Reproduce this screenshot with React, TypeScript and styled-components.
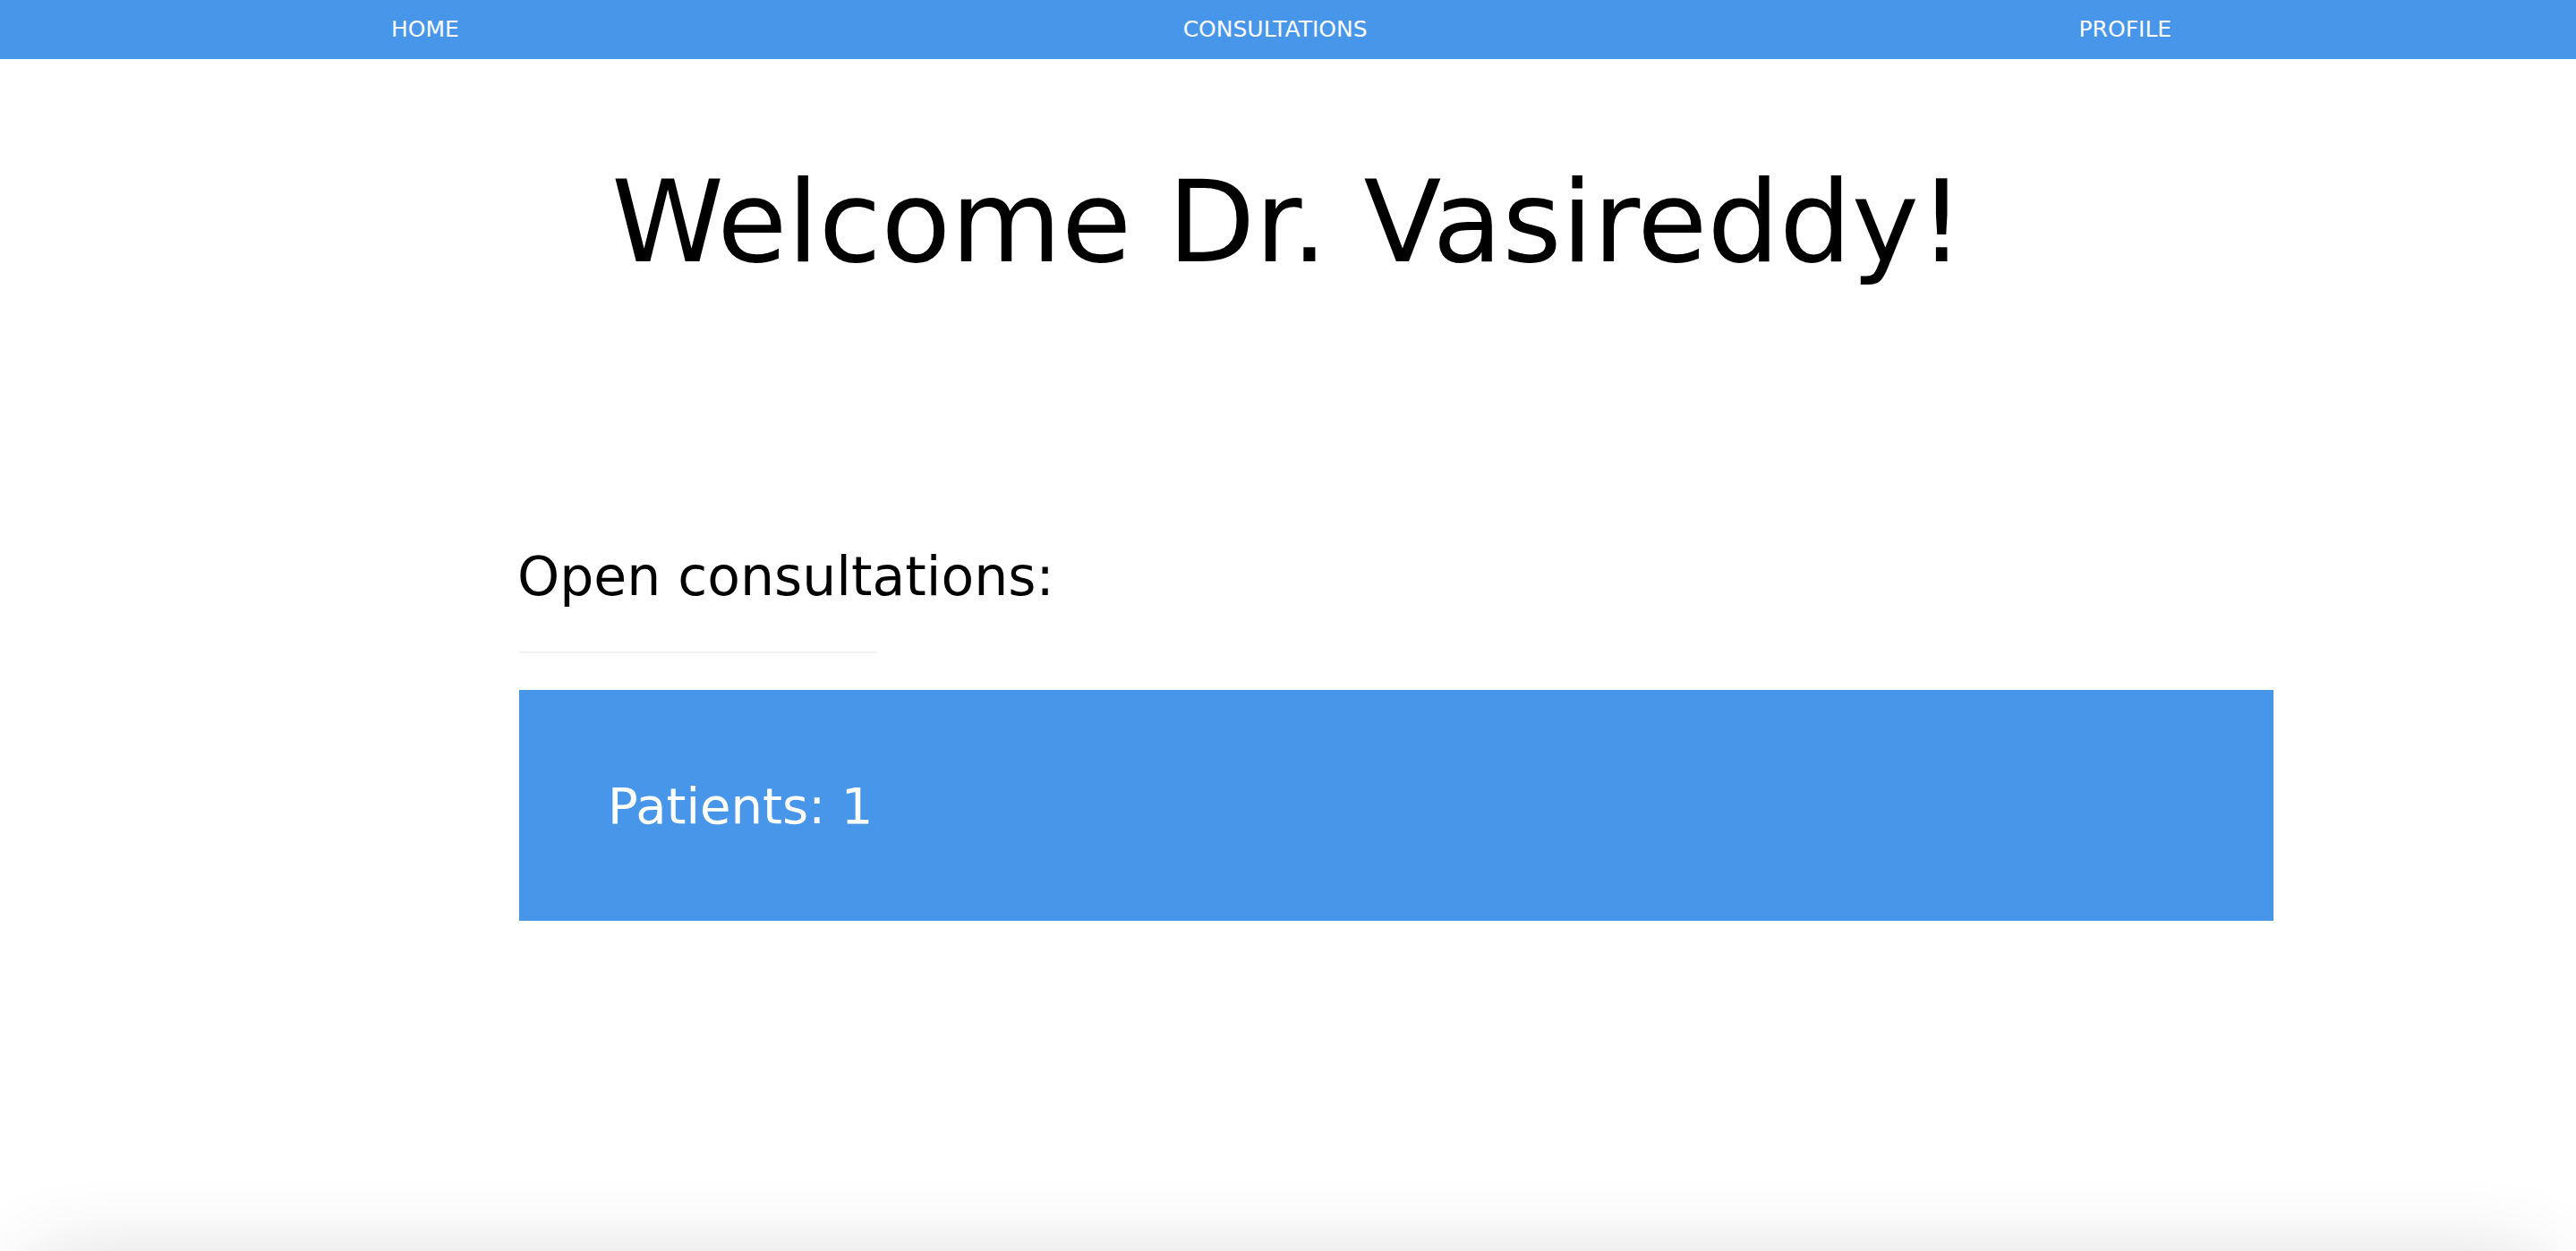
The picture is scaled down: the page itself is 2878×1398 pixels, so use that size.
import React from "react";
import styled, { createGlobalStyle } from "styled-components";

const GlobalStyle = createGlobalStyle`
  html, body {
    margin: 0;
    padding: 0;
    background: #ffffff;
  }
  body {
    font-family: "DejaVu Sans", "Liberation Sans", sans-serif;
    color: #000000;
  }
`;

const Page = styled.div`
  min-height: 100vh;
  display: flex;
  flex-direction: column;
`;

const NavBar = styled.nav`
  display: flex;
  height: 66px;
  background-color: #4796ea;
`;

const NavItem = styled.a`
  width: 33%;
  text-align: center;
  line-height: 66px;
  font-size: 25px;
  color: #ffffff;
  text-decoration: none;
  text-transform: uppercase;
`;

const Title = styled.h1`
  margin: 119px 0 0;
  font-size: 127px;
  font-weight: 400;
  line-height: 1;
  text-align: center;
`;

const Section = styled.section`
  display: flex;
  flex-direction: column;
  align-items: flex-start;
  padding-left: 578px;
  margin-top: 302px;
`;

const SectionTitle = styled.h2`
  margin: 0;
  font-size: 60px;
  font-weight: 400;
  line-height: 1;
`;

const Divider = styled.hr`
  width: 400px;
  height: 2px;
  margin: 54px 0 0 2px;
  border: none;
  background-color: #f2f2f2;
`;

const PatientCard = styled.div`
  display: flex;
  align-items: center;
  box-sizing: border-box;
  width: 1960px;
  height: 258px;
  margin: 41px 0 0 2px;
  padding-left: 99px;
  background-color: #4796ea;
  color: #ffffff;
  font-size: 56px;
`;

const Footer = styled.footer`
  height: 300px;
  margin: 12px 36px 0;
  background-color: #ffffff;
  box-shadow: 0 0 90px rgba(0, 0, 0, 0.16);
`;

const links = ["Home", "Consultations", "Profile"];

const App = () => {
  return (
    <>
      <GlobalStyle />
      <Page>
        <NavBar>
          {links.map((link) => (
            <NavItem key={link} href="#">
              {link}
            </NavItem>
          ))}
        </NavBar>
        <Title>Welcome Dr. Vasireddy!</Title>
        <Section>
          <SectionTitle>Open consultations:</SectionTitle>
          <Divider />
          <PatientCard>Patients: 1</PatientCard>
        </Section>
      </Page>
      <Footer />
    </>
  );
};

export default App;
